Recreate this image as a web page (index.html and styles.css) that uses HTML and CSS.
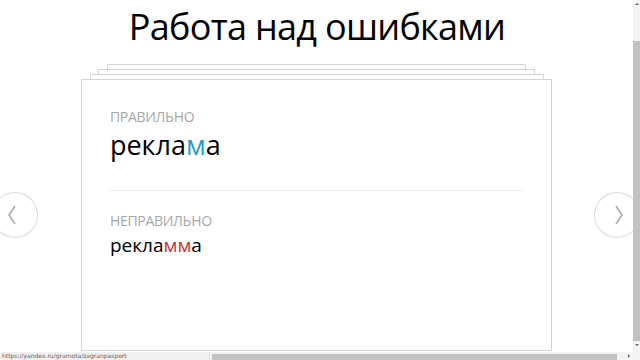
FILE: index.html
```html
<!DOCTYPE html>
<html lang="ru">
<head>
  <meta charset="UTF-8" />
  <title>Работа над ошибками</title>
  <meta name="viewport" content="width=device-width, initial-scale=1.0" />
  <link rel="stylesheet" href="styles.css">
</head>
<body>
  <main class="page">
    <h1 class="title">Работа над ошибками</h1>

    <!-- листы под карточкой -->
    <div class="deck">
      <div class="sheet sheet-3"></div>
      <div class="sheet sheet-2"></div>
      <div class="sheet sheet-1"></div>
    </div>

    <div class="row">
      <a href="#" class="arrow arrow-prev">
        <svg width="10" height="20" viewBox="0 0 10 20"><polyline points="8,1 2,10 8,19" /></svg>
      </a>

      <section class="card">
        <div class="label">Правильно</div>
        <div class="word word-right">рекла<span class="ok">м</span>а</div>
        <hr class="sep">
        <div class="label">Неправильно</div>
        <div class="word word-wrong">рекла<span class="bad">мм</span>а</div>
      </section>

      <a href="#" class="arrow arrow-next">
        <svg width="10" height="20" viewBox="0 0 10 20"><polyline points="2,1 8,10 2,19" /></svg>
      </a>
    </div>
  </main>

  <!-- полоса прокрутки и строка состояния браузера -->
  <div class="vscroll">
    <span class="vs-up"></span>
    <span class="vs-thumb"></span>
    <span class="vs-down"></span>
  </div>
  <div class="statusbar">
    <span class="status-url">https://yandex.ru/gramota/zagranpasport</span>
    <span class="hs-thumb"></span>
    <span class="hs-arrow"></span>
  </div>
</body>
</html>
```

FILE: styles.css
```css
body {
  margin: 0;
  width: 640px;
  height: 360px;
  overflow: hidden;
  position: relative;
  background: #fff;
  font-family: "Open Sans", "Noto Sans", Arial, sans-serif;
  color: #000;
}
.page {
  width: 640px;
}
.title {
  margin: 0;
  padding-top: 4px;
  height: 60px;
  text-align: center;
  font-size: 36px;
  font-weight: 400;
  line-height: 46px;
  letter-spacing: -0.7px;
  padding-right: 6px;
}
.deck {
  width: 472px;
  margin-left: 81px;
}
.sheet {
  height: 4px;
  border: 1px solid #d4d4d4;
  border-bottom: none;
}
.sheet-3 {
  margin: 0 27px 0 26px;
}
.sheet-2 {
  margin: 0 18px 0 17px;
}
.sheet-1 {
  margin: 0 9px 0 9px;
}
.row {
  display: flex;
  align-items: center;
  margin-left: -8px;
}
.arrow {
  width: 46px;
  height: 46px;
  border: 1px solid #dadada;
  border-radius: 50%;
  box-sizing: border-box;
  display: flex;
  align-items: center;
  justify-content: center;
}
.arrow polyline {
  fill: none;
  stroke: #a9a9a9;
  stroke-width: 1.6;
}
.arrow-prev {
  margin-right: 43px;
}
.arrow-prev svg {
  margin-left: -6px;
}
.arrow-next {
  margin-left: 42px;
}
.arrow-next svg {
  margin-left: 4px;
}
.card {
  width: 472px;
  height: 272px;
  box-sizing: border-box;
  border: 1px solid #d4d4d4;
  padding: 27px 29px 0 28px;
}
.label {
  text-transform: uppercase;
  color: #a6a6a6;
  font-size: 14px;
  line-height: 19px;
  letter-spacing: -0.3px;
}
.word-right {
  font-size: 27px;
  line-height: 37px;
}
.word-wrong {
  font-size: 19px;
  line-height: 26px;
  margin-top: 2px;
}
.ok {
  color: #1f9fc4;
}
.bad {
  color: #d9262e;
}
.sep {
  border: none;
  border-top: 1px solid #ececec;
  margin: 27px 0 20px;
}

/* браузерные полосы */
.vscroll {
  position: absolute;
  top: 0;
  right: 0;
  width: 7px;
  height: 352px;
  background: #f3f3f3;
  display: flex;
  flex-direction: column;
  align-items: center;
}
.vs-up, .vs-down {
  width: 0;
  height: 0;
  border-left: 2px solid transparent;
  border-right: 2px solid transparent;
  margin: 3px 0;
}
.vs-up {
  border-bottom: 2px solid #606060;
}
.vs-down {
  border-top: 2px solid #606060;
}
.vs-thumb {
  width: 7px;
  height: 300px;
  margin-top: 33px;
  background: #c2c2c2;
}
.statusbar {
  position: absolute;
  left: 0;
  bottom: 0;
  width: 640px;
  height: 8px;
  background: #f3f3f3;
  display: flex;
  align-items: flex-end;
}
.status-url {
  width: 210px;
  height: 8px;
  font-family: "DejaVu Sans", sans-serif;
  font-size: 6px;
  line-height: 8px;
  color: #606060;
  background: #f0f0f0;
  border-right: 1px solid #e0e0e0;
  padding-left: 2px;
  box-sizing: border-box;
  white-space: nowrap;
  overflow: hidden;
}
.hs-thumb {
  width: 405px;
  height: 6px;
  margin-left: 2px;
  background: #c2c2c2;
}
.hs-arrow {
  width: 0;
  height: 0;
  margin: 0 0 2px 11px;
  border-top: 2px solid transparent;
  border-bottom: 2px solid transparent;
  border-left: 2px solid #606060;
}
```
